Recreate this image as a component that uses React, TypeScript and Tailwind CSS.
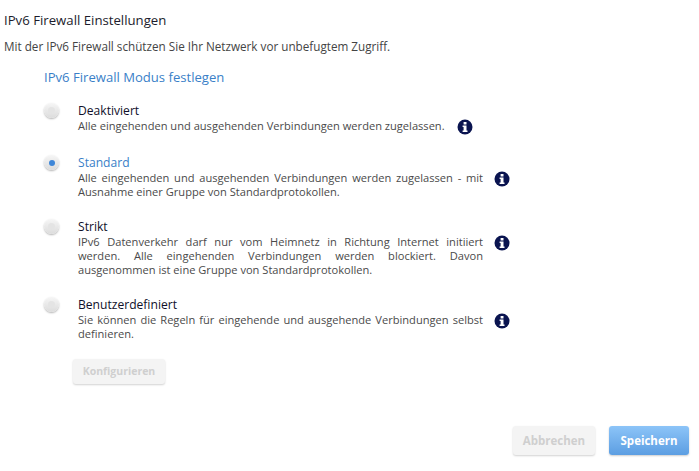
const font = "font-['Open_Sans','Noto_Sans',sans-serif]";

function InfoIcon() {
  return (
    <svg width="16" height="16" viewBox="0 0 16 16" className="block shrink-0">
      <circle cx="8" cy="8" r="7.5" fill="#0a1450" />
      <rect x="6.6" y="3" width="2.9" height="2.6" rx="0.4" fill="#fff" />
      <path d="M5.6 6.6h3.9v4.8h1v1.5H5.6v-1.5h1V8.1h-1z" fill="#fff" />
    </svg>
  );
}

function Radio({ on }: { on?: boolean }) {
  return (
    <div className="w-[15px] h-[15px] rounded-full bg-gradient-to-b from-[#f6f6f6] to-[#dcdcdc] shadow-[0_1px_2px_rgba(0,0,0,0.3)] flex items-center justify-center">
      <div className={on ? "w-[6px] h-[6px] rounded-full bg-[#3f87d8]" : "w-[7px] h-[7px] rounded-full bg-[#e4e4e4]"} />
    </div>
  );
}

type Opt = { title: string; on?: boolean; text: string; infoX: string; mb: string; justify?: boolean };

const opts: Opt[] = [
  { title: "Deaktiviert", text: "Alle eingehenden und ausgehenden Verbindungen werden zugelassen.", infoX: "ml-[12px]", mb: "mb-[20px]" },
  { title: "Standard", on: true, text: "Alle eingehenden und ausgehenden Verbindungen werden zugelassen - mit Ausnahme einer Gruppe von Standardprotokollen.", infoX: "ml-[11px]", mb: "mb-[20px]", justify: true },
  { title: "Strikt", text: "IPv6 Datenverkehr darf nur vom Heimnetz in Richtung Internet initiiert werden. Alle eingehenden Verbindungen werden blockiert. Davon ausgenommen ist eine Gruppe von Standardprotokollen.", infoX: "ml-[11px]", mb: "mb-[20px]", justify: true },
  { title: "Benutzerdefiniert", text: "Sie können die Regeln für eingehende und ausgehende Verbindungen selbst definieren.", infoX: "ml-[11px]", mb: "mb-[18px]", justify: true },
];

export default function App() {
  return (
    <div className={`w-[699px] h-[471px] bg-white overflow-hidden flex flex-col pt-[11px] pl-[4px] ${font}`}>
      <h1 className="text-[13.2px] leading-[18px] text-[#1c1c2c] font-normal">IPv6 Firewall Einstellungen</h1>
      <p className="mt-[9px] text-[11.7px] leading-[16px] text-[#444]">Mit der IPv6 Firewall schützen Sie Ihr Netzwerk vor unbefugtem Zugriff.</p>
      <div className="pl-[40px] mt-[14px] flex flex-col">
        <h2 className="text-[13.1px] leading-[18px] text-[#3a7fc8] font-normal mb-[17px]">IPv6 Firewall Modus festlegen</h2>
        {opts.map((o) => (
          <div key={o.title} className={`flex ${o.mb}`}>
            <div className="w-[34px]"><Radio on={o.on} /></div>
            <div className="flex items-start">
              <div className={o.justify ? "w-[405px]" : ""}>
                <div className={`text-[12.1px] leading-[16px] ${o.on ? "text-[#3a7fc8]" : "text-[#10102a]"}`}>{o.title}</div>
                <p className={`text-[11.1px] leading-[14px] text-[#4a4a4a] ${o.justify ? "text-justify" : ""}`}>{o.text}</p>
              </div>
              <div className={`${o.infoX} mt-[16px]`}><InfoIcon /></div>
            </div>
          </div>
        ))}
        <button className="ml-[29px] w-[92px] h-[25px] rounded-[3px] bg-[#f4f4f4] shadow-[0_1px_2px_rgba(0,0,0,0.18)] text-[10.5px] font-bold text-[#cfcfcf]">Konfigurieren</button>
      </div>
      <div className="mt-auto mb-[16px] mr-[10px] flex justify-end gap-[14px]">
        <button className="w-[82px] h-[29px] rounded-[3px] bg-[#f4f4f4] shadow-[0_1px_2px_rgba(0,0,0,0.18)] text-[11.5px] font-bold text-[#cfcfcf]">Abbrechen</button>
        <button className="w-[80px] h-[29px] rounded-[3px] bg-gradient-to-b from-[#8cc4f8] to-[#5c9ee2] shadow-[0_1px_2px_rgba(0,0,0,0.2)] text-[11.5px] font-bold text-white">Speichern</button>
      </div>
    </div>
  );
}
